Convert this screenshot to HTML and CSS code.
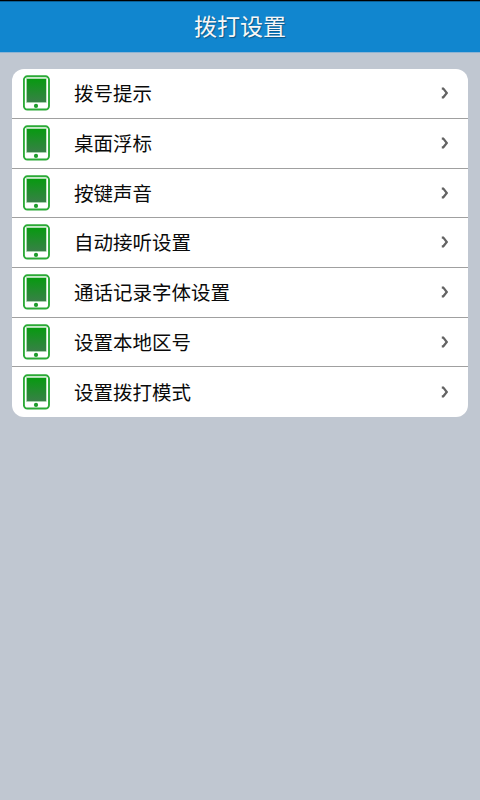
FILE: index.html
```html
<!DOCTYPE html>
<html lang="zh-CN">
<head>
<meta charset="utf-8">
<title>拨打设置</title>
<link rel="stylesheet" href="styles.css">
</head>
<body>
<svg class="defs" width="0" height="0" aria-hidden="true">
  <defs>
    <linearGradient id="screen" x1="0" y1="0" x2="0" y2="1">
      <stop offset="0" stop-color="#079a10"/>
      <stop offset="1" stop-color="#398048"/>
    </linearGradient>
    <symbol id="phone" viewBox="0 0 28 36">
      <rect x=".9" y="1.3" width="25.1" height="33.2" rx="3.5" fill="#fff" stroke="#2baa36" stroke-width="1.9"/>
      <rect x="3.4" y="3.6" width="19.9" height="24" fill="url(#screen)" stroke="#bce5bf" stroke-width=".6"/>
      <circle cx="13" cy="30.9" r="2.1" fill="#1c9d2a"/>
    </symbol>
    <symbol id="arrow" viewBox="0 0 8 12">
      <path d="M.8 1.6H2.3L5.8 6L2.3 10.3H.8" fill="none" stroke="#636363" stroke-width="2.2"/>
    </symbol>
  </defs>
</svg>
<header class="header"><h1 class="title">拨打设置</h1></header>
<main class="content">
  <ul class="list">
    <li class="row"><svg class="phone"><use href="#phone"/></svg><span class="label">拨号提示</span><svg class="arrow"><use href="#arrow"/></svg></li>
    <li class="row"><svg class="phone"><use href="#phone"/></svg><span class="label">桌面浮标</span><svg class="arrow"><use href="#arrow"/></svg></li>
    <li class="row"><svg class="phone"><use href="#phone"/></svg><span class="label">按键声音</span><svg class="arrow"><use href="#arrow"/></svg></li>
    <li class="row"><svg class="phone"><use href="#phone"/></svg><span class="label">自动接听设置</span><svg class="arrow"><use href="#arrow"/></svg></li>
    <li class="row"><svg class="phone"><use href="#phone"/></svg><span class="label">通话记录字体设置</span><svg class="arrow"><use href="#arrow"/></svg></li>
    <li class="row"><svg class="phone"><use href="#phone"/></svg><span class="label">设置本地区号</span><svg class="arrow"><use href="#arrow"/></svg></li>
    <li class="row"><svg class="phone"><use href="#phone"/></svg><span class="label">设置拨打模式</span><svg class="arrow"><use href="#arrow"/></svg></li>
  </ul>
</main>
</body>
</html>
```
FILE: styles.css
```css
* {
  box-sizing: border-box;
}

body {
  margin: 0;
  height: 800px;
  overflow: hidden;
  display: flex;
  flex-direction: column;
  background: #c0c7d1;
  color: #0a0a0a;
  font-family: "Noto Sans CJK SC", sans-serif;
}

.defs {
  position: absolute;
}

.header {
  height: 53px;
  display: flex;
  align-items: center;
  justify-content: center;
  padding-bottom: 5px;
  background: linear-gradient(#0b5f95 0 1px, #1186cf 1px 51px, #8fb4d3 51px);
  border-top: 1px solid #000;
}

.title {
  margin: 0;
  font-size: 23px;
  line-height: 34px;
  font-weight: 400;
  color: #f7f7f7;
  text-shadow: 1px 1px 1px rgba(0, 0, 0, .35);
}

.content {
  padding: 16px 12px;
}

.list {
  margin: 0;
  padding: 0;
  list-style: none;
  height: 347.6px;
  display: grid;
  grid-template-rows: 50px 50px 49px 50px 50px 49px 1fr;
  background: #fff;
  border-radius: 12px;
  overflow: hidden;
}

.row {
  display: flex;
  align-items: center;
  padding: 0 19px 1px 11px;
  border-bottom: 1px solid #a0a0a0;
}

.row:nth-child(3n) {
  padding-bottom: 0;
}

.row:last-child {
  padding-bottom: 0;
  border-bottom: 0;
}

.phone {
  width: 28px;
  height: 36px;
  flex: none;
}

.label {
  flex: 1;
  margin-left: 23px;
  font-size: 19.5px;
  line-height: 28px;
}

.arrow {
  width: 8px;
  height: 12px;
  flex: none;
}
```
